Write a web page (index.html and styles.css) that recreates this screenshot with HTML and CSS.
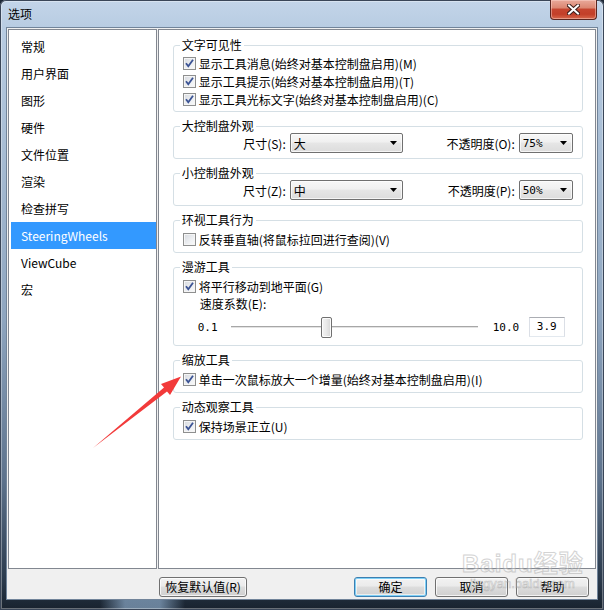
FILE: index.html
```html
<!DOCTYPE html>
<html lang="zh-CN">
<head>
<meta charset="utf-8">
<title>选项</title>
<link rel="stylesheet" href="styles.css">
</head>
<body>
<div class="window">
  <div class="titlebar">
    <span class="title">选项</span>
    <button class="close" aria-label="关闭">
      <svg width="13" height="11" viewBox="0 0 13 11">
        <path d="M2 1.5 L11 9.5 M11 1.5 L2 9.5" stroke="#3b1e1a" stroke-width="4" stroke-linecap="square" fill="none"/>
        <path d="M2 1.5 L11 9.5 M11 1.5 L2 9.5" stroke="#ffffff" stroke-width="2" stroke-linecap="square" fill="none"/>
      </svg>
    </button>
  </div>
  <div class="client">
    <div class="panels">
      <ul class="nav">
        <li>常规</li>
        <li>用户界面</li>
        <li>图形</li>
        <li>硬件</li>
        <li>文件位置</li>
        <li>渲染</li>
        <li>检查拼写</li>
        <li class="sel">SteeringWheels</li>
        <li>ViewCube</li>
        <li>宏</li>
      </ul>
      <div class="page">
        <fieldset class="grp">
          <legend>文字可见性</legend>
          <div class="body">
            <label class="chk"><span class="cb"><svg width="11" height="11" viewBox="0 0 11 11"><path d="M2 5.2 L4.3 8.3 L9 1.8" stroke="#3b5394" stroke-width="1.8" fill="none"/></svg></span>显示工具消息(始终对基本控制盘启用)(M)</label>
            <label class="chk"><span class="cb"><svg width="11" height="11" viewBox="0 0 11 11"><path d="M2 5.2 L4.3 8.3 L9 1.8" stroke="#3b5394" stroke-width="1.8" fill="none"/></svg></span>显示工具提示(始终对基本控制盘启用)(T)</label>
            <label class="chk"><span class="cb"><svg width="11" height="11" viewBox="0 0 11 11"><path d="M2 5.2 L4.3 8.3 L9 1.8" stroke="#3b5394" stroke-width="1.8" fill="none"/></svg></span>显示工具光标文字(始终对基本控制盘启用)(C)</label>
          </div>
        </fieldset>

        <fieldset class="grp">
          <legend>大控制盘外观</legend>
          <div class="crow">
            <span class="lbl1">尺寸(S):</span>
            <span class="combo wide"><span class="val">大</span><svg width="7" height="4" viewBox="0 0 7 4"><path d="M0 0 H7 L3.5 4 Z" fill="#000"/></svg></span>
            <span class="lbl2">不透明度(O):</span>
            <span class="combo narrow"><span class="val num">75%</span><svg width="7" height="4" viewBox="0 0 7 4"><path d="M0 0 H7 L3.5 4 Z" fill="#000"/></svg></span>
          </div>
        </fieldset>

        <fieldset class="grp">
          <legend>小控制盘外观</legend>
          <div class="crow">
            <span class="lbl1">尺寸(Z):</span>
            <span class="combo wide"><span class="val">中</span><svg width="7" height="4" viewBox="0 0 7 4"><path d="M0 0 H7 L3.5 4 Z" fill="#000"/></svg></span>
            <span class="lbl2">不透明度(P):</span>
            <span class="combo narrow"><span class="val num">50%</span><svg width="7" height="4" viewBox="0 0 7 4"><path d="M0 0 H7 L3.5 4 Z" fill="#000"/></svg></span>
          </div>
        </fieldset>

        <fieldset class="grp">
          <legend>环视工具行为</legend>
          <div class="body single">
            <label class="chk"><span class="cb"></span>反转垂直轴(将鼠标拉回进行查阅)(V)</label>
          </div>
        </fieldset>

        <fieldset class="grp">
          <legend>漫游工具</legend>
          <div class="body walk">
            <label class="chk"><span class="cb"><svg width="11" height="11" viewBox="0 0 11 11"><path d="M2 5.2 L4.3 8.3 L9 1.8" stroke="#3b5394" stroke-width="1.8" fill="none"/></svg></span>将平行移动到地平面(G)</label>
            <div class="speed">速度系数(E):</div>
            <div class="srow">
              <span class="num min">0.1</span>
              <div class="track"><span class="thumb" style="margin-left:90px"></span></div>
              <span class="num max">10.0</span>
              <span class="edit num">3.9</span>
            </div>
          </div>
        </fieldset>

        <fieldset class="grp">
          <legend>缩放工具</legend>
          <div class="body single">
            <label class="chk"><span class="cb"><svg width="11" height="11" viewBox="0 0 11 11"><path d="M2 5.2 L4.3 8.3 L9 1.8" stroke="#3b5394" stroke-width="1.8" fill="none"/></svg></span>单击一次鼠标放大一个增量(始终对基本控制盘启用)(I)</label>
          </div>
        </fieldset>

        <fieldset class="grp">
          <legend>动态观察工具</legend>
          <div class="body single">
            <label class="chk"><span class="cb"><svg width="11" height="11" viewBox="0 0 11 11"><path d="M2 5.2 L4.3 8.3 L9 1.8" stroke="#3b5394" stroke-width="1.8" fill="none"/></svg></span>保持场景正立(U)</label>
          </div>
        </fieldset>
      </div>
    </div>
    <div class="buttons">
      <button class="btn reset">恢复默认值(R)</button>
      <button class="btn def">确定</button>
      <button class="btn">取消</button>
      <button class="btn">帮助</button>
    </div>
  </div>

  <div class="watermark">
    <span class="wm-big">Bai<span class="wm-du">du</span>经验</span>
    <span class="wm-small">jingyan.baidu.com</span>
  </div>

  <svg class="arrow" width="604" height="610" viewBox="0 0 604 610">
    <polygon points="93,448 164,387.5 161,384 181,376.5 170,395 167,391.5" fill="#f23a3a"/>
  </svg>
</div>
</body>
</html>
```

FILE: styles.css
```css
* { box-sizing: border-box; }

html, body {
  margin: 0;
  padding: 0;
  width: 604px;
  height: 610px;
  overflow: hidden;
  background: #1c2735;
}

body {
  font-family: "Noto Sans CJK SC", "Noto Sans", sans-serif;
  font-size: 12px;
  color: #000;
}

.window {
  position: relative;
  width: 604px;
  height: 610px;
  padding: 0 7px 11px 7px;
  display: flex;
  flex-direction: column;
  border-radius: 6px 6px 0 0;
  background:
    linear-gradient(90deg, transparent 100px, rgba(170,205,240,0.55) 125px, rgba(170,205,240,0.55) 160px, transparent 185px) bottom / 100% 11px no-repeat,
    linear-gradient(180deg, #c3d5e9 0px, #b8cce2 28px, #a9bed5 140px, #8ea5bf 320px, #5d728c 480px, #2b3a4c 580px, #18222e 610px);
  box-shadow: inset 0 0 0 1px #3a4658, inset 0 0 0 2px rgba(255,255,255,0.35);
}

.titlebar {
  height: 28px;
  display: flex;
  align-items: flex-start;
  justify-content: space-between;
}

.title {
  margin-top: 6px;
  padding-left: 1px;
  line-height: 16px;
  font-size: 12px;
  color: #000;
}

.close {
  width: 47px;
  height: 20px;
  margin: 0;
  padding: 0;
  border: 1px solid #5a2620;
  border-top: none;
  border-radius: 0 0 4px 4px;
  background: linear-gradient(180deg, #e9a99a 0%, #dc8873 40%, #c5452f 50%, #c23f29 75%, #d7684c 100%);
  box-shadow: inset 0 0 0 1px rgba(255,220,210,0.45);
  display: flex;
  align-items: center;
  justify-content: center;
}

.client {
  flex: 1;
  display: flex;
  flex-direction: column;
  padding: 1px 1px 0 1px;
  background: #f0f0f0;
  box-shadow: 0 0 0 1px #71849a;
}

.panels {
  height: 540px;
  display: flex;
  gap: 1px;
}

.nav {
  list-style: none;
  margin: 0;
  width: 149px;
  padding: 3px 0 0 2px;
  background: #fff;
  border: 1px solid #828790;
}

.nav li {
  height: 27px;
  line-height: 27px;
  padding-left: 10px;
  white-space: nowrap;
}

.nav li.sel {
  background: #3399ff;
  color: #fff;
}

.page {
  width: 439px;
  background: #fff;
  border: 1px solid #828790;
  padding: 9px 12px 0 14px;
  display: flex;
  flex-direction: column;
  gap: 8px;
}

.grp {
  margin: 0;
  padding: 0 6px;
  min-inline-size: 0;
  border: 1px solid #d5dfe5;
  border-radius: 3px;
}

.grp legend {
  padding: 0 2px;
  line-height: 12px;
  font-size: 12px;
}

.body {
  padding: 3px 0 3px 0;
}

.body.single {
  padding: 4px 0 4px 0;
}

.body.walk {
  padding: 4px 0 6px 0;
}

.chk {
  display: flex;
  align-items: center;
  height: 18px;
  padding-left: 3px;
  white-space: nowrap;
}

.cb {
  flex: none;
  width: 13px;
  height: 13px;
  margin-right: 3px;
  border: 1px solid #8e8f8f;
  background: linear-gradient(135deg, #d6d9de 0%, #eef0f3 60%, #fafafa 100%);
  box-shadow: inset 0 0 0 1px #f5f5f5;
  display: flex;
  align-items: center;
  justify-content: center;
}

.crow {
  display: flex;
  align-items: center;
  padding: 1px 0 5px 0;
}

.lbl1 {
  width: 106px;
  text-align: right;
  margin-right: 4px;
  white-space: nowrap;
}

.lbl2 {
  width: 112px;
  text-align: right;
  margin-right: 4px;
  white-space: nowrap;
}

.combo {
  height: 20px;
  display: flex;
  align-items: center;
  justify-content: space-between;
  padding: 0 5px 0 3px;
  border: 1px solid #707070;
  border-radius: 2px;
  background: linear-gradient(180deg, #f7f7f7 0%, #f0f0f0 45%, #e6e6e6 50%, #dcdcdc 100%);
  box-shadow: inset 0 0 0 1px rgba(255,255,255,0.7);
}

.combo.wide { width: 113px; }
.combo.narrow { width: 54px; }

.num {
  font-family: "DejaVu Sans Mono", "Liberation Mono", monospace;
  font-size: 11px;
}

.speed {
  height: 18px;
  line-height: 18px;
  padding-left: 20px;
}

.srow {
  display: flex;
  align-items: center;
  height: 24px;
  margin-top: 2px;
  padding-left: 18px;
}

.min {
  width: 33px;
}

.track {
  width: 247px;
  height: 21px;
  display: flex;
  align-items: center;
  background: linear-gradient(180deg, transparent 9px, #a7a7a7 9px, #a7a7a7 10px, #e3e3e3 10px, #e3e3e3 11px, transparent 11px);
}

.thumb {
  width: 11px;
  height: 21px;
  border: 1px solid #707070;
  border-radius: 2px;
  background: linear-gradient(90deg, #f4f4f4 0%, #e8e8e8 50%, #d6d6d6 100%);
  box-shadow: inset 0 0 0 1px #fbfbfb;
}

.max {
  margin-left: 15px;
  width: 26px;
}

.edit {
  margin-left: 10px;
  width: 36px;
  height: 20px;
  line-height: 18px;
  text-align: center;
  border: 1px solid #dbdfe6;
  border-top-color: #abadb3;
  border-bottom-color: #e3e9ef;
  background: #fff;
}

.buttons {
  flex: 1;
  display: flex;
  align-items: flex-start;
  padding: 8px 7px 0 151px;
  gap: 8px;
}

.btn {
  height: 20px;
  width: 73px;
  margin: 0;
  padding: 0;
  font-family: "Noto Sans CJK SC", "Noto Sans", sans-serif;
  font-size: 12px;
  line-height: 18px;
  color: #000;
  border: 1px solid #707070;
  border-radius: 3px;
  background: linear-gradient(180deg, #f2f2f2 0%, #ebebeb 45%, #dddddd 50%, #cfcfcf 100%);
  box-shadow: inset 0 0 0 1px rgba(255,255,255,0.75);
}

.btn.reset {
  width: 88px;
}

.btn.def {
  margin-left: auto;
  border-color: #3c7fb1;
  box-shadow: inset 0 0 0 1px #7fd0f6, inset 0 0 0 2px rgba(255,255,255,0.6);
}

.watermark {
  position: absolute;
  left: 462px;
  top: 551px;
  display: flex;
  flex-direction: column;
  align-items: flex-start;
  pointer-events: none;
  opacity: 0.5;
}

.wm-big {
  font-family: "Liberation Sans", "Noto Sans CJK SC", sans-serif;
  font-size: 24px;
  font-weight: bold;
  line-height: 26px;
  color: rgba(255,255,255,0.6);
  -webkit-text-stroke: 1px #a9a9a9;
  letter-spacing: 1px;
}

.wm-du {
  font-size: 24px;
}

.wm-small {
  font-family: "Liberation Sans", sans-serif;
  font-size: 13px;
  line-height: 14px;
  margin-left: 8px;
  color: rgba(255,255,255,0.6);
  -webkit-text-stroke: 0.6px #9a9a9a;
}

.arrow {
  position: absolute;
  left: 0;
  top: 0;
  pointer-events: none;
}
```
